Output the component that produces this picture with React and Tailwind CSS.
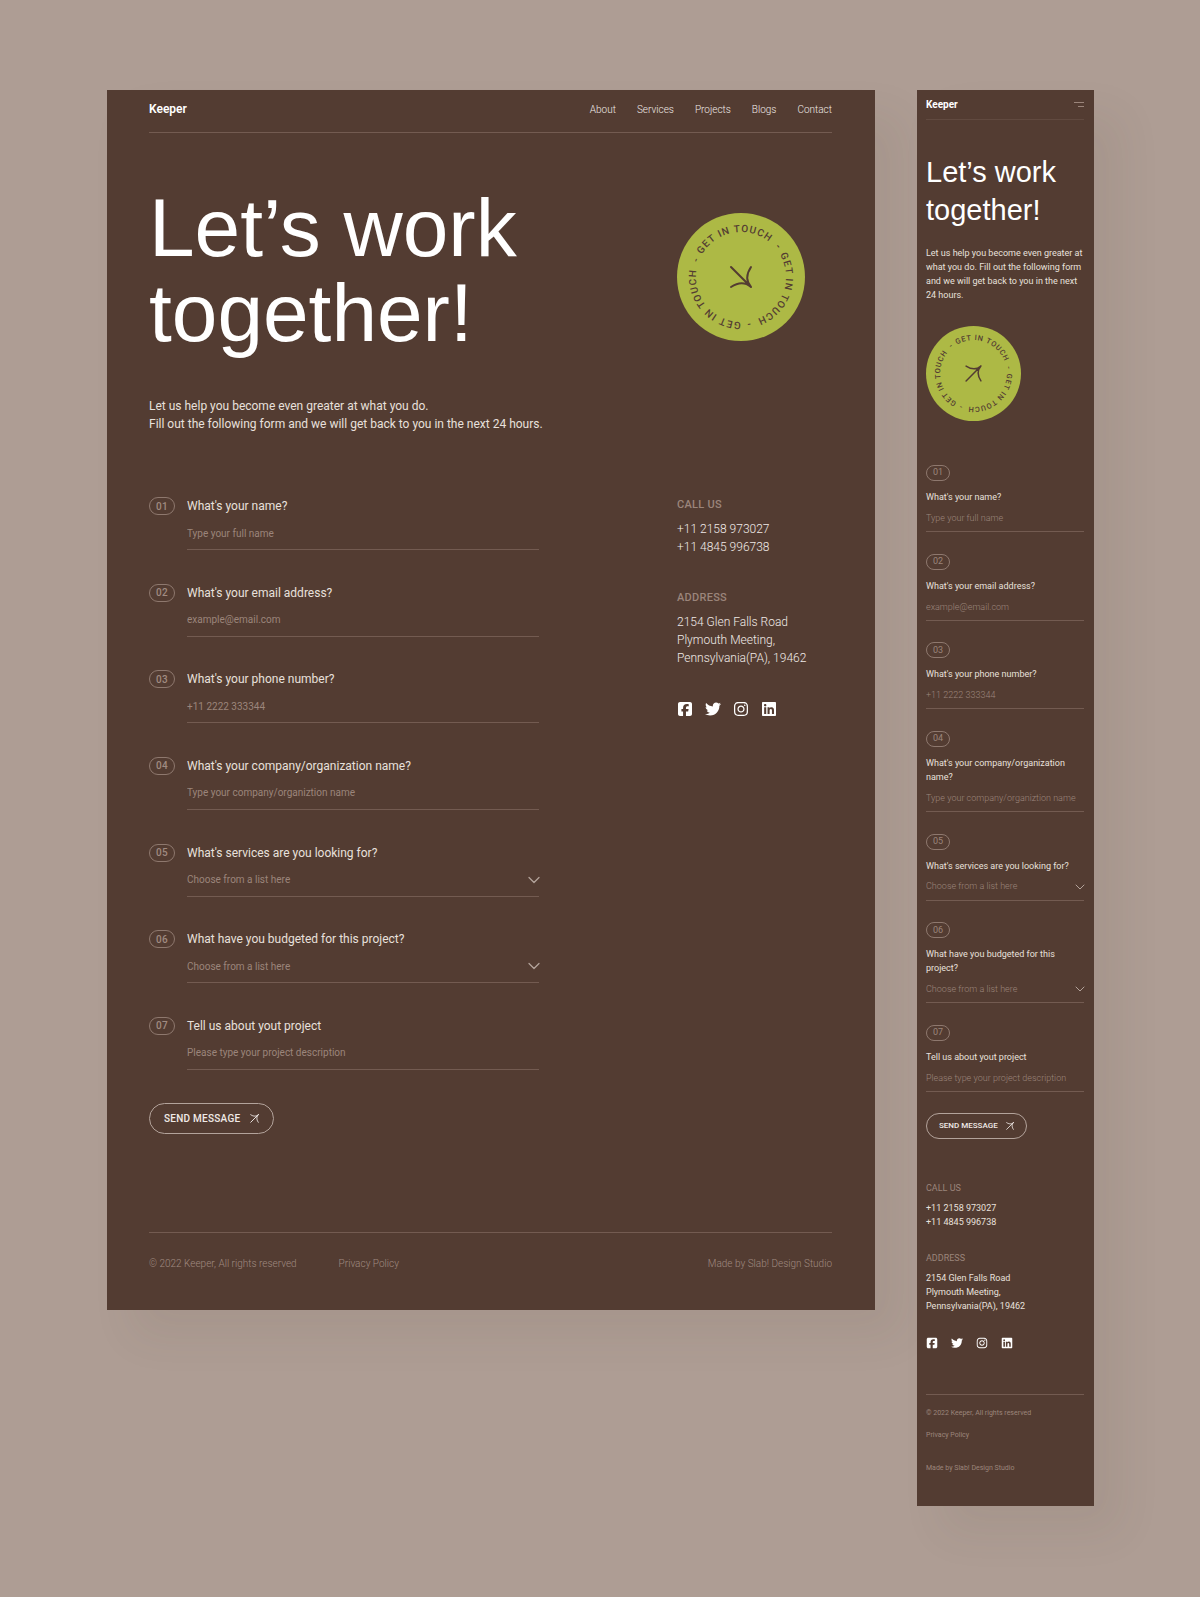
import { useId } from "react";
import { ChevronDown } from "lucide-react";
import { FaSquareFacebook, FaTwitter, FaInstagram, FaLinkedin } from "react-icons/fa6";

const FIELDS = [
  { no: "01", label: "What's your name?", hint: "Type your full name", kind: "text" },
  { no: "02", label: "What's your email address?", hint: "example@email.com", kind: "email" },
  { no: "03", label: "What's your phone number?", hint: "+11 2222 333344", kind: "tel" },
  { no: "04", label: "What's your company/organization name?", hint: "Type your company/organiztion name", kind: "text" },
  { no: "05", label: "What's services are you looking for?", hint: "Choose from a list here", kind: "select" },
  { no: "06", label: "What have you budgeted for this project?", hint: "Choose from a list here", kind: "select" },
  { no: "07", label: "Tell us about yout project", hint: "Please type your project description", kind: "text" },
];

const SOCIALS = [
  { name: "Facebook", Icon: FaSquareFacebook },
  { name: "Twitter", Icon: FaTwitter },
  { name: "Instagram", Icon: FaInstagram },
  { name: "LinkedIn", Icon: FaLinkedin },
];

/* Arrow with two curved barbs, pointing to the upper right */
function Arrow({ className, weight = 2 }) {
  return (
    <svg viewBox="0 0 24 24" className={className} fill="none" stroke="currentColor" strokeWidth={weight} strokeLinecap="round" aria-hidden="true">
      <path d="M2 22 22 2M2 2c6 4 13 6 20 0M22 22c-4-6-6-13 0-20" />
    </svg>
  );
}

/* Round stamp: the phrase runs three times round the circle */
function Stamp({ className, turn, arrowTurn }) {
  const id = useId();
  return (
    <svg viewBox="0 0 128 128" className={className} role="img" aria-label="Get in touch">
      <defs>
        <path id={id} d="M64 109A45 45 0 0 1 64 19A45 45 0 0 1 64 109" />
      </defs>
      <circle cx="64" cy="64" r="64" fill="#adb945" />
      {[0, 120, 240].map((a) => (
        <g key={a} transform={`rotate(${a + turn} 64 64)`}>
          <text className="fill-[#533c32] text-[10px] font-medium tracking-[1px]">
            <textPath href={`#${id}`} startOffset="94">GET IN TOUCH</textPath>
          </text>
          <text className="fill-[#533c32] text-[10px] font-medium">
            <textPath href={`#${id}`} startOffset="179">-</textPath>
          </text>
        </g>
      ))}
      <g transform={`rotate(${arrowTurn} 64 64)`} fill="none" stroke="#533c32" strokeWidth="2" strokeLinecap="round">
        <path d="M54 74 74 54M54 54c6 4 13 6 20 0M74 74c-4-6-6-13 0-20" />
      </g>
    </svg>
  );
}

function Field({ field, compact }) {
  const id = useId();
  const size = compact ? "h-[14px] text-[9px] font-light" : "h-5 text-[10px]";
  const control = `${size} block w-full appearance-none bg-transparent text-[#9b857b] placeholder:text-[#9b857b] outline-none`;
  return (
    <div className={compact ? "flex flex-col items-start" : "flex items-start gap-3"}>
      <span
        className={
          compact
            ? "mb-[9px] flex h-4 w-6 items-center justify-center rounded-full border border-[#8e786e] text-[9px] text-[#9b857b]"
            : "flex h-[18px] w-[26px] items-center justify-center rounded-full border border-[#8e786e] text-[10px] font-medium tracking-wide text-[#a08b81]"
        }
      >
        {field.no}
      </span>
      <div className={compact ? "w-full" : "flex-1"}>
        <label
          htmlFor={id}
          className={compact ? "block text-[9px] leading-[14px] text-[#e8e0dc]" : "block text-[12px] leading-[18px] text-[#e8e0dc]"}
        >
          {field.label}
        </label>
        <div className={`${compact ? "mt-[7px] pb-[6px]" : "mt-2 pb-[6px]"} relative border-b border-[#735b51]`}>
          {field.kind === "select" ? (
            <>
              <select id={id} className={control}>
                <option>{field.hint}</option>
              </select>
              <ChevronDown
                aria-hidden="true"
                strokeWidth={1.5}
                className={`${compact ? "-top-px -right-1 size-4" : "top-0 -right-[5px] size-5"} pointer-events-none absolute text-[#b3a39b]`}
              />
            </>
          ) : (
            <input id={id} type={field.kind} placeholder={field.hint} className={control} />
          )}
        </div>
      </div>
    </div>
  );
}

function Socials({ className, iconClass }) {
  return (
    <div className={className}>
      {SOCIALS.map(({ name, Icon }) => (
        <a key={name} href="#" aria-label={name}>
          <Icon className={iconClass} />
        </a>
      ))}
    </div>
  );
}

function DesktopPage() {
  return (
    <section className="bg-[#533c32] pr-[43px] pl-[42px] text-white shadow-[26px_26px_40px_rgba(82,59,50,0.08)]">
      <header className="flex h-[43px] items-center justify-between border-b border-[#735b51] pb-1">
        <a href="#" className="text-[12px] font-semibold">Keeper</a>
        <nav className="flex gap-[21px] text-[10px] font-light text-[#f0eae7]">
          {["About", "Services", "Projects", "Blogs", "Contact"].map((item) => (
            <a key={item} href="#">{item}</a>
          ))}
        </nav>
      </header>

      <div className="mt-[52px] grid grid-cols-[1fr_155px]">
        <div>
          <h1 className="font-['Liberation_Sans',sans-serif] text-[82px] leading-[85px]">
            Let’s work
            <br />
            together!
          </h1>
          <p className="mt-[42px] text-[12px] leading-[18px] text-[#e8e0dc]">
            Let us help you become even greater at what you do.
            <br />
            Fill out the following form and we will get back to you in the next 24 hours.
          </p>
        </div>
        <Stamp className="mt-7 size-32" turn={0} arrowTurn={90} />
      </div>

      <div className="mt-[62px] grid grid-cols-[1fr_155px]">
        <form className="mr-[138px] pt-0.5">
          <div className="flex min-h-[573px] flex-col justify-between">
            {FIELDS.map((f) => (
              <Field key={f.no} field={f} />
            ))}
          </div>
          <button type="button" className="mt-[33px] flex h-[31px] items-center gap-[10px] rounded-full border border-[#b3a39b] px-[14px] text-[10px] font-medium tracking-wide text-[#f0eae7]">
            SEND MESSAGE
            <Arrow className="size-[9px]" weight={2.5} />
          </button>
        </form>

        <aside className="pt-px font-light text-[#f0eae7]">
          <h2 className="text-[11px] leading-[18px] font-medium tracking-wide text-[#9b857b]">CALL US</h2>
          <p className="mt-[6px] text-[12px] leading-[18px]">
            +11 2158 973027
            <br />
            +11 4845 996738
          </p>
          <h2 className="mt-[33px] text-[11px] leading-[18px] font-medium tracking-wide text-[#9b857b]">ADDRESS</h2>
          <p className="mt-[6px] text-[12px] leading-[18px]">
            2154 Glen Falls Road
            <br />
            Plymouth Meeting,
            <br />
            Pennsylvania(PA), 19462
          </p>
          <Socials className="mt-[34px] flex gap-3 text-white" iconClass="size-4" />
        </aside>
      </div>

      <footer className="mt-[98px] flex justify-between border-t border-[#735b51] pt-[23px] pb-[38px] text-[10px] leading-4 font-light text-[#a08b81]">
        <div className="flex gap-[42px]">
          <span>© 2022 Keeper, All rights reserved</span>
          <a href="#">Privacy Policy</a>
        </div>
        <span>Made by Slab! Design Studio</span>
      </footer>
    </section>
  );
}

function MobilePage() {
  return (
    <section className="bg-[#533c32] pr-[10px] pb-8 pl-[9px] text-white shadow-[26px_26px_40px_rgba(82,59,50,0.08)]">
      <header className="flex h-[30px] items-center justify-between border-b border-[#614a40]">
        <a href="#" className="text-[10px] font-bold">Keeper</a>
        <button type="button" aria-label="Menu" className="flex flex-col items-end gap-[3px]">
          <span className="h-px w-[10px] bg-[#9b857b]" />
          <span className="h-px w-[6px] bg-[#9b857b]" />
        </button>
      </header>

      <h1 className="mt-[33px] font-['Liberation_Sans',sans-serif] text-[29px] leading-[38px]">
        Let’s work
        <br />
        together!
      </h1>
      <p className="mt-[17px] text-[9px] leading-[14px] text-[#e8e0dc]">
        Let us help you become even greater at what you do. Fill out the following form and we will get back to you in the next 24 hours.
      </p>
      <Stamp className="mt-6 size-[95px]" turn={30} arrowTurn={0} />

      <form className="mt-11">
        <div className="flex min-h-[627px] flex-col justify-between">
          {FIELDS.map((f) => (
            <Field key={f.no} field={f} compact />
          ))}
        </div>
        <button type="button" className="mt-[21px] flex h-[26px] items-center gap-2 rounded-full border border-[#b3a39b] px-3 text-[8px] font-medium text-[#f0eae7]">
          SEND MESSAGE
          <Arrow className="size-2" weight={2.5} />
        </button>
      </form>

      <aside className="mt-[42px] text-[9px] leading-[14px] text-[#e8e0dc]">
        <h2 className="text-[#9b857b]">CALL US</h2>
        <p className="mt-[6px]">
          +11 2158 973027
          <br />
          +11 4845 996738
        </p>
        <h2 className="mt-[22px] text-[#9b857b]">ADDRESS</h2>
        <p className="mt-[6px]">
          2154 Glen Falls Road
          <br />
          Plymouth Meeting,
          <br />
          Pennsylvania(PA), 19462
        </p>
        <Socials className="mt-6 flex gap-[13px] text-white" iconClass="size-3" />
      </aside>

      <footer className="mt-[45px] border-t border-[#735b51] pt-3 text-[7px] leading-3 text-[#9b857b]">
        <p>© 2022 Keeper, All rights reserved</p>
        <a href="#" className="mt-[10px] block">Privacy Policy</a>
        <p className="mt-[21px]">Made by Slab! Design Studio</p>
      </footer>
    </section>
  );
}

export default function App() {
  return (
    <main className="grid min-h-screen grid-cols-[768fr_177fr] items-start gap-[42px] bg-[#ae9d94] pt-[90px] pr-[106px] pb-[90px] pl-[107px] font-['Roboto',sans-serif]">
      <DesktopPage />
      <MobilePage />
    </main>
  );
}
